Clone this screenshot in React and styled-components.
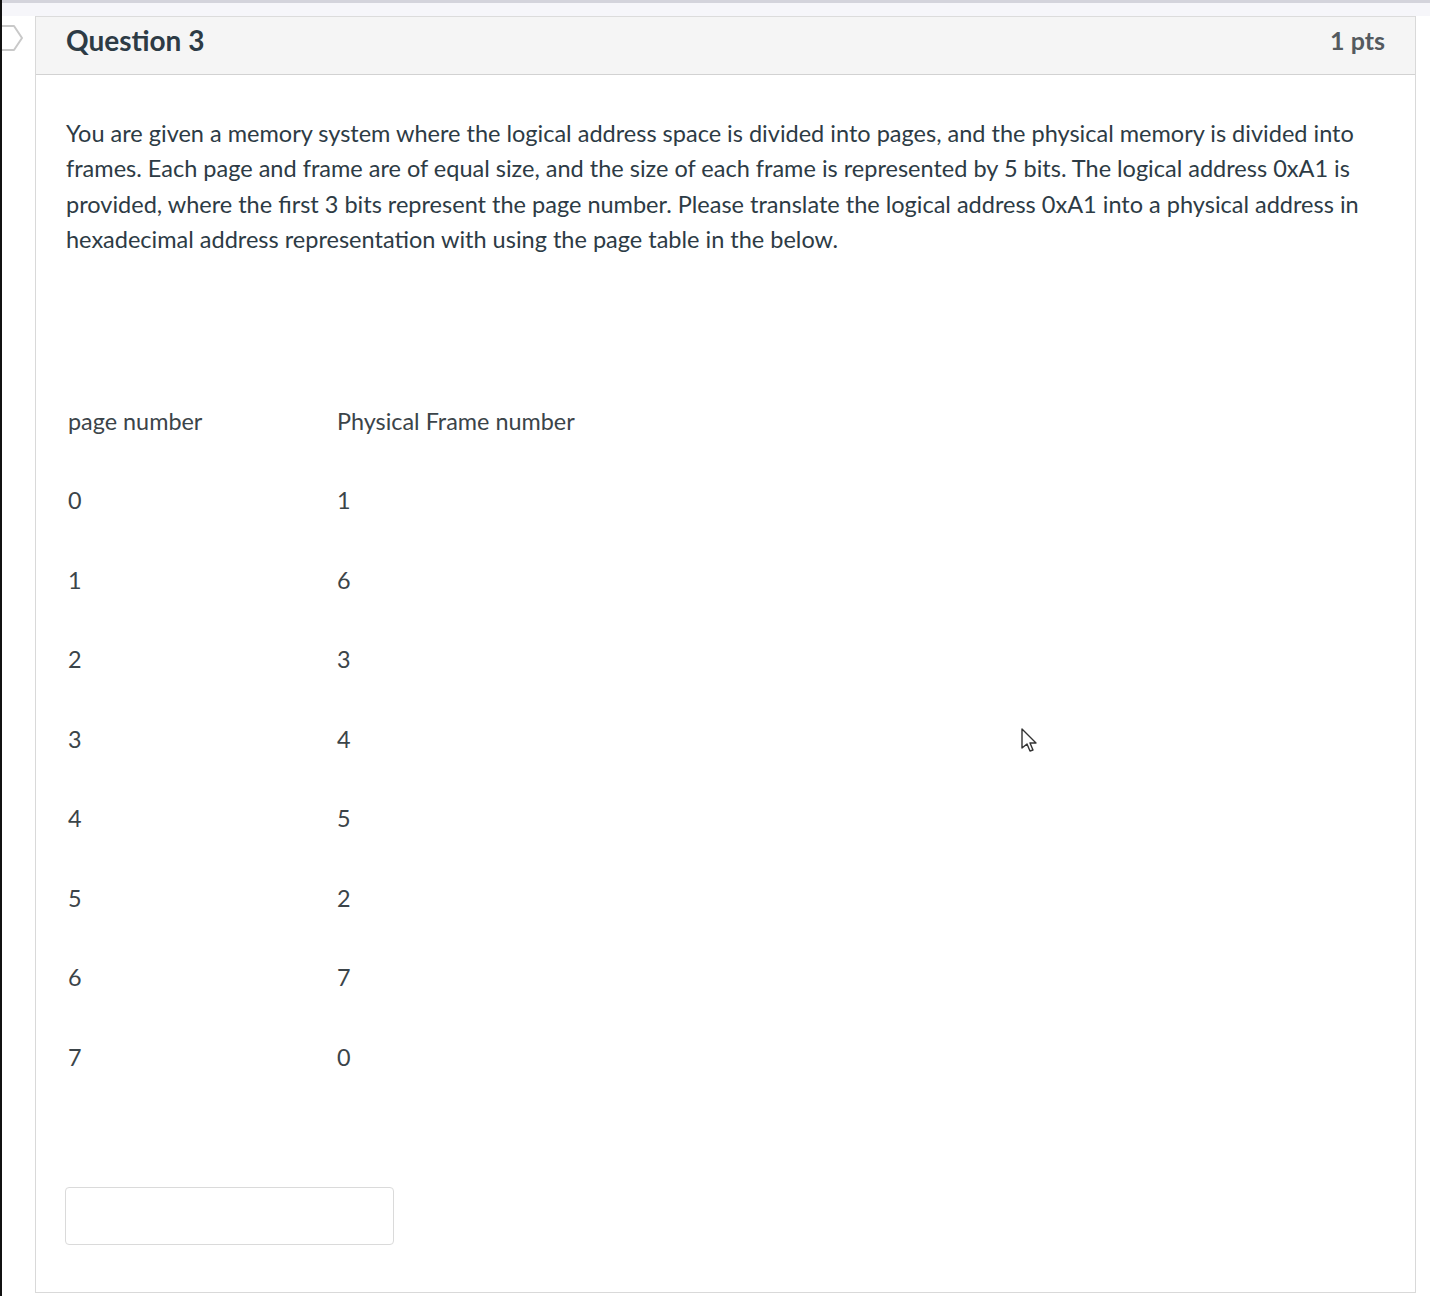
import React from "react";
import styled, { createGlobalStyle } from "styled-components";

const Global = createGlobalStyle`
  html, body { margin: 0; padding: 0; background: #ffffff; }
  body { font-family: Lato, "Open Sans", "Liberation Sans", sans-serif; color: #2d3b45; }
`;

const Page = styled.div`
  position: relative;
  width: 1430px;
  height: 1296px;
  overflow: hidden;
  display: flex;
  background: #ffffff;
`;

const LeftStrip = styled.div`
  width: 2px;
  flex: none;
  background: #111111;
`;

const Gutter = styled.div`
  width: 33px;
  flex: none;
  padding-top: 8px;
  box-sizing: border-box;
  display: flex;
  flex-direction: column;
  align-items: flex-start;
`;

const Main = styled.div`
  flex: 1;
  display: flex;
  flex-direction: column;
`;

const TopBand = styled.div`
  height: 16px;
  flex: none;
  background: #f6f6fa;
  border-top: 3px solid #d4d4dc;
  box-sizing: border-box;
`;

const Body = styled.div`
  display: flex;
`;

const QuestionBox = styled.section`
  width: 1381px;
  flex: none;
  border: 1px solid #d9d9d9;
  border-top: none;
  box-sizing: border-box;
  display: flex;
  flex-direction: column;
  height: 1277px;
`;

const Header = styled.header`
  height: 59px;
  box-sizing: border-box;
  background: #f5f5f5;
  border-top: 1px solid #dcdcdc;
  border-bottom: 1px solid #d2d2d2;
  display: flex;
  align-items: flex-start;
  justify-content: space-between;
  padding: 9px 30px 0 30px;
`;

const Title = styled.h2`
  margin: 0;
  font-size: 28px;
  font-weight: 700;
  color: #2d3b45;
  line-height: 28px;
`;

const Points = styled.span`
  font-size: 25px;
  font-weight: 700;
  color: #545a5f;
  line-height: 28px;
`;

const Content = styled.div`
  padding: 41px 30px 0 30px;
  display: flex;
  flex-direction: column;
`;

const Para = styled.p`
  margin: 0;
  font-size: 23.52px;
  line-height: 35.3px;
  color: #2d3b45;
  font-weight: 400;
`;

const Table = styled.div`
  margin-top: 124px;
  display: grid;
  grid-template-columns: 269px 1fr;
  grid-auto-rows: 79.5px;
  padding-left: 2px;
`;

const Cell = styled.div`
  display: flex;
  align-items: center;
  font-size: 23.4px;
  color: #3b4449;
`;

const Answer = styled.input`
  margin-top: 90px;
  margin-left: -1px;
  width: 329px;
  height: 58px;
  box-sizing: border-box;
  border: 1px solid #dadada;
  border-radius: 4px;
  background: #fff;
  outline: none;
`;

const Pointer = styled.svg`
  position: absolute;
  left: 1019px;
  top: 727px;
`;

const rows = [
  [0, 1],
  [1, 6],
  [2, 3],
  [3, 4],
  [4, 5],
  [5, 2],
  [6, 7],
  [7, 0],
];

export default function App() {
  return (
    <>
      <Global />
      <Page>
        <LeftStrip />
        <Main>
          <TopBand />
          <Body>
            <Gutter>
              <svg width="22" height="28" viewBox="0 0 22 28">
                <path
                  d="M-6 2 H12 L20 14 L12 26 H-6"
                  fill="none"
                  stroke="#c9c9c9"
                  strokeWidth="2"
                  strokeLinejoin="round"
                />
              </svg>
            </Gutter>
            <QuestionBox>
              <Header>
                <Title>Question 3</Title>
                <Points>1 pts</Points>
              </Header>
              <Content>
                <Para>
                  You are given a memory system where the logical address space is divided into pages, and the physical memory is divided into frames. Each page and frame are of equal size, and the size of each frame is represented by 5 bits. The logical address 0xA1 is provided, where the first 3 bits represent the page number. Please translate the logical address 0xA1 into a physical address in hexadecimal address representation with using the page table in the below.
                </Para>
                <Table>
                  <Cell>page number</Cell>
                  <Cell>Physical Frame number</Cell>
                  {rows.map(([p, f]) => (
                    <React.Fragment key={p}>
                      <Cell>{p}</Cell>
                      <Cell>{f}</Cell>
                    </React.Fragment>
                  ))}
                </Table>
                <Answer type="text" aria-label="answer" />
              </Content>
            </QuestionBox>
          </Body>
        </Main>
        <Pointer width="22" height="30" viewBox="0 0 22 30">
          <path
            d="M3 2 L3 21 L8 17 L11 24 L14 23 L11 16 L17 16 Z"
            fill="#ffffff"
            stroke="#333333"
            strokeWidth="1.4"
            strokeLinejoin="round"
          />
        </Pointer>
      </Page>
    </>
  );
}
